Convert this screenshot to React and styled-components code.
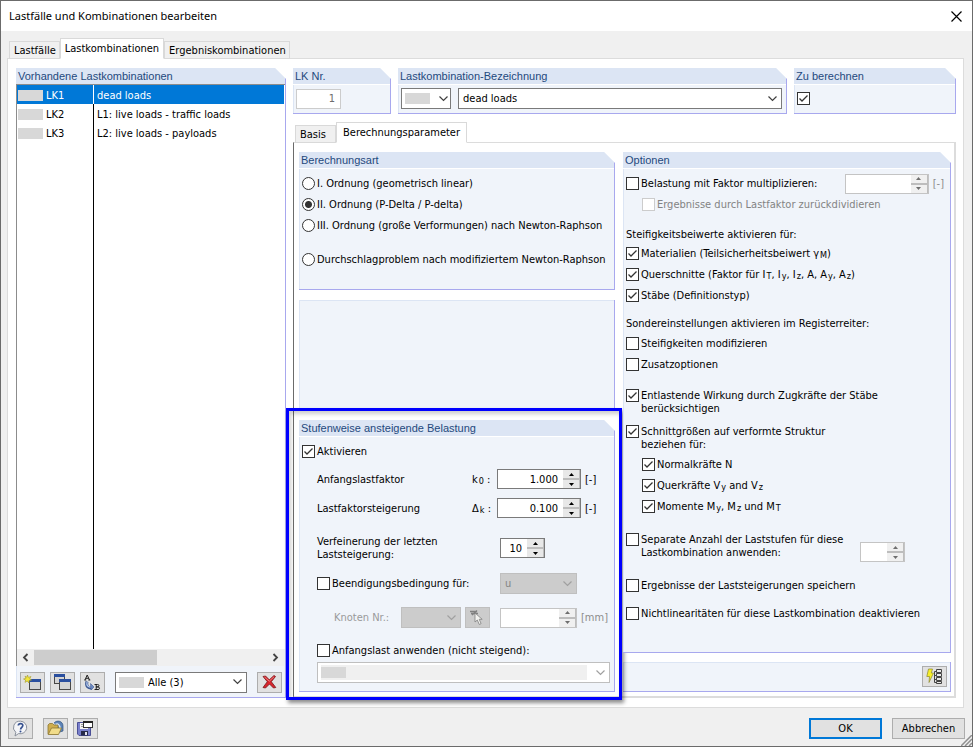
import React, { useId } from "react";
import styled, { createGlobalStyle, css } from "styled-components";

const UI = `"DejaVu Sans Condensed", "DejaVu Sans", sans-serif`;

const Global = createGlobalStyle`
  *, *::before, *::after { box-sizing: border-box; }
  body { margin: 0; background: #f0f0f0; color: #000; font: 11px/13px ${UI}; }
  button, input, select { font: inherit; color: inherit; margin: 0; }
`;

const svgUrl = (w, h, body) =>
  `url("data:image/svg+xml,${encodeURIComponent(
    `<svg xmlns='http://www.w3.org/2000/svg' width='${w}' height='${h}'>${body}</svg>`
  )}")`;
const tick = svgUrl(11, 11, "<path d='M1.5 5.5 4 8 9.5 2.5' fill='none' stroke='#333' stroke-width='1.3'/>");
const chevron = (color) =>
  svgUrl(9, 6, `<path d='M.5 .5 4.500 4.500 8.500 .5' fill='none' stroke='${color}' stroke-width='1.2'/>`);

const Window = styled.div`
  min-height: 100vh;
  display: flex;
  flex-direction: column;
  border: 1px solid #6b6b6b;
  background: #f0f0f0;
`;
const TitleBar = styled.header`
  display: flex;
  align-items: center;
  justify-content: space-between;
  height: 30px;
  padding: 0 8px;
  background: #fff;
`;
const Title = styled.h1`
  margin: 0;
  font: 11px/16px "Noto Sans", sans-serif;
`;
const CloseButton = styled.button`
  display: flex;
  padding: 2px;
  border: 0;
  background: none;
`;
const Dialog = styled.main`
  flex: 1;
  display: flex;
  flex-direction: column;
  padding: 7px 8px 0 6px;
`;
const TabBar = styled.div`
  display: flex;
  align-items: flex-end;
  height: ${(p) => (p.$inner ? 22 : 21)}px;
  padding-left: 2px;
  position: relative;
  z-index: 1;
  margin-bottom: -1px;
`;
const Tab = styled.button`
  min-width: 41px;
  height: ${(p) => (p.$active ? 21 : 18)}px;
  padding: ${(p) => (p.$active ? "0 4px 1px" : "1px 3px 0 4px")};
  ${(p) => p.$roomy && css`padding-left: 6px; padding-right: 6px;`}
  text-align: left;
  border: 1px solid #d9d9d9;
  border-bottom-color: ${(p) => (p.$active ? "#fff" : "#d9d9d9")};
  background: ${(p) => (p.$active ? "#fff" : "#f0f0f0")};
  white-space: nowrap;
  & + & { border-left-width: ${(p) => (p.$active ? 1 : 0)}px; }
`;
const TabPage = styled.div`
  flex: 1;
  display: grid;
  grid-template-columns: 270px minmax(0, 1fr);
  column-gap: 7px;
  padding: 9px 7px 9px 8px;
  border: 1px solid #dcdcdc;
  background: #fff;
`;
const Column = styled.div`
  display: flex;
  flex-direction: column;
  min-width: 0;
`;

/* Group frame with a clipped top-right corner */
const GroupFrame = styled.section`
  display: flex;
  flex-direction: column;
  min-width: 0;
  border: solid #a8a8ee;
  border-width: 0 1px 1px 0;
  background: #f0f4fa;
  box-shadow: inset 1px 0 #dce5f4${(p) => (p.$plain ? ", inset 0 1px #dce5f4" : "")};
  ${(p) => !p.$plain && css`
    clip-path: polygon(0 0, calc(100% - 11px) 0, 100% 11px, 100% 100%, 0 100%);
  `}
  ${(p) => p.$grow && css`flex: 1;`}
`;
const GroupTitle = styled.h2`
  margin: 0;
  height: 17px;
  padding: 0 2px;
  border-bottom: 1px solid #fff;
  background: #dce5f4;
  color: #1f497d;
  font: 11px/16px "Liberation Sans", sans-serif;
  flex: none;
`;
const GroupBody = styled.div`
  padding: 4px 4px 4px 3px;
`;
function Group({ title, grow, children }) {
  return (
    <GroupFrame $grow={grow}>
      <GroupTitle>{title}</GroupTitle>
      {children}
    </GroupFrame>
  );
}

const ListPane = styled.div`
  flex: 1;
  display: flex;
  flex-direction: column;
  margin-top: -1px;
  border: solid #8c8c8c;
  border-width: 1px 0 0 1px;
  background: linear-gradient(#000, #000) 76px 0 / 1px 100% no-repeat #fff;
`;
const ListRow = styled.button`
  display: grid;
  grid-template-columns: 77px 1fr;
  height: 19px;
  padding: 1px 0 0;
  border: 0;
  margin-right: ${(p) => (p.$selected ? 1 : 0)}px;
  text-align: left;
  align-items: center;
  color: ${(p) => (p.$selected ? "#fff" : "#000")};
  background: ${(p) =>
    p.$selected ? "linear-gradient(#fff, #fff) 76px 0 / 1px 100% no-repeat #0078d7" : "none"};
`;
const RowKey = styled.span`
  display: flex;
  align-items: center;
  gap: 3px;
  padding-left: 1px;
`;
const RowText = styled.span`
  padding-left: 3px;
`;
const Swatch = styled.span`
  flex: none;
  width: 25px;
  height: 11px;
  background: #d8d8d8;
`;
const ScrollBar = styled.div`
  display: grid;
  grid-template-columns: 17px 1fr 17px;
  height: 17px;
  border-left: 1px solid #8c8c8c;
  background: #f0f0f0;
  margin-right: 1px;
`;
const ScrollArrow = styled.button`
  display: grid;
  place-items: center;
  padding: 0;
  border: 0;
  background: none;
`;
const ScrollTrack = styled.div`
  padding: 1px 0;
`;
const ScrollThumb = styled.div`
  width: 53%;
  height: 15px;
  background: #cdcdcd;
`;
const Toolbar = styled.div`
  display: flex;
  align-items: center;
  gap: 5px;
  height: 31px;
  padding: 1px 3px 0 4px;
`;
const IconButton = styled.button`
  flex: none;
  display: grid;
  place-items: center;
  width: 25px;
  height: 21px;
  padding: 0;
  border: 1px solid ${(p) => (p.disabled ? "#bfbfbf" : "#adadad")};
  background: ${(p) => (p.disabled ? "#ccc" : "#e1e1e1")};
`;
const Select = styled.span`
  display: flex;
  align-items: center;
  min-width: 0;
  height: 21px;
  padding-left: ${(p) => (p.$swatch ? 3 : 0)}px;
  border: 1px solid ${(p) => (p.$off ? "#bfbfbf" : "#7a7a7a")};
  background: ${(p) => (p.$gray ? "#ccc" : "#fff")};
  color: ${(p) => (p.$off ? "#838383" : "#000")};
  flex: ${(p) => (p.$width ? `0 0 ${p.$width}px` : "1")};
  select {
    appearance: none;
    flex: 1;
    min-width: 0;
    height: 19px;
    padding: 0 18px 0 4px;
    border: 0;
    border-radius: 0;
    opacity: 1;
    color: inherit;
    background: ${(p) => chevron(p.$off ? "#a0a0a0" : "#404040")} right 4px center no-repeat;
  }
`;
const FillBar = styled.span`
  flex: 1;
  display: flex;
  height: 15px;
  align-items: center;
  background: #f0f0f0;
`;
const NarrowSlot = styled.span`
  flex: 0 0 19px;
  display: flex;
`;

const SpinFrame = styled.span`
  flex: 0 0 ${(p) => p.$width}px;
  display: flex;
  height: 20px;
  border: 1px solid ${(p) => (p.$off ? "#c4c4c4" : "#7a7a7a")};
  background: #fff;
`;
const SpinInput = styled.input`
  flex: 1;
  min-width: 0;
  width: 0;
  padding: 0 5px;
  border: 0;
  background: none;
  text-align: right;
`;
const SpinButtons = styled.span`
  display: grid;
  grid-template-rows: 1fr 1fr;
  gap: 2px;
  flex: 0 0 17px;
  padding-right: 1px;
  background: #bdbdbd;
`;
const SpinButton = styled.button`
  display: grid;
  place-items: center;
  padding: 0;
  border: 0;
  background: ${(p) => (p.disabled ? "#f0f0f0" : "#e8e8e8")};
  svg { fill: ${(p) => (p.disabled ? "#6e6e6e" : "#000")}; }
`;
function Spin({ label, value = "", width, off }) {
  return (
    <SpinFrame $width={width} $off={off}>
      <SpinInput aria-label={label} defaultValue={value} disabled={off} />
      <SpinButtons>
        <SpinButton aria-label={`${label} +`} disabled={off}>
          <svg width="5" height="3"><path d="M0 3 2.500 0 5 3z" /></svg>
        </SpinButton>
        <SpinButton aria-label={`${label} -`} disabled={off}>
          <svg width="5" height="3"><path d="M0 0 2.500 3 5 0z" /></svg>
        </SpinButton>
      </SpinButtons>
    </SpinFrame>
  );
}

const ChoiceRow = styled.div`
  display: flex;
  align-items: ${(p) => (p.$top ? "flex-start" : "center")};
  gap: 2px;
  min-height: ${(p) => (p.$top ? 0 : 21)}px;
  margin-top: ${(p) => p.$space || 0}px;
  padding-left: ${(p) => (p.$indent ? 16 : 0)}px;
  color: ${(p) => (p.$off ? "#838383" : "#000")};
`;
const Box = styled.input`
  appearance: none;
  flex: none;
  width: 13px;
  height: 13px;
  border: 1px solid #333;
  background: #fff;
  ${(p) => p.type === "radio" && css`
    border-radius: 50%;
    &:checked { background: radial-gradient(circle, #333 3px, #fff 4px); }
  `}
  ${(p) => p.type === "checkbox" && css`
    &:checked { background: ${tick} center no-repeat #fff; }
  `}
  &:disabled { border-color: #ccc; }
`;
const Caption = styled.label`
  white-space: nowrap;
`;
function Choice({ type = "checkbox", name, checked, children, after, ...row }) {
  const id = useId();
  return (
    <ChoiceRow {...row}>
      <Box id={id} type={type} name={name} defaultChecked={checked} disabled={row.$off} />
      <Caption htmlFor={id}>{children}</Caption>
      {after}
    </ChoiceRow>
  );
}
const Sub = styled.sub`
  margin-left: 1px;
  font-size: 9px;
  line-height: 0;
  vertical-align: -1px;
`;
const Note = styled.p`
  margin: ${(p) => p.$space}px 0 ${(p) => p.$below || 2}px;
`;
const EndSlot = styled.span`
  display: flex;
  align-items: center;
  gap: 4px;
  margin-left: auto;
  padding-right: ${(p) => (p.$inset ? 41 : 2)}px;
  align-self: ${(p) => (p.$inset ? "flex-end" : "center")};
  margin-bottom: ${(p) => (p.$inset ? -3 : 0)}px;
`;
const Unit = styled.span`
  color: ${(p) => (p.$off ? "#8c8c8c" : "#000")};
`;

const HeadRow = styled.div`
  display: grid;
  grid-template-columns: 98px minmax(0, 1fr) 162px;
  column-gap: 7px;
  height: 46px;
`;
const HeadFields = styled.div`
  display: flex;
  align-items: center;
  gap: 7px;
  flex: 1;
  padding: 0 4px 1px 3px;
`;
const NumberField = styled.input`
  width: 45px;
  height: 20px;
  padding: 0 5px;
  border: 1px solid #ccc;
  background: #fff;
  text-align: right;
  color: #6d6d6d;
`;
const ParamTabs = styled.div`
  display: flex;
  flex-direction: column;
  flex: 1;
  margin-top: 7px;
`;
const ParamPage = styled.div`
  flex: 1;
  display: grid;
  grid-template-columns: 316px minmax(0, 1fr);
  column-gap: 8px;
  padding: 9px 3px 4px 5px;
  border: solid #dcdcdc;
  border-width: 1px 2px 2px 1px;
  border-left-color: #6b6b6b;
`;
const OptionColumn = styled(Column)`
  gap: 9px;
`;
const ModeColumn = styled(Column)`
  gap: 10px;
`;
const ModeBody = styled(GroupBody)`
  height: 120px;
`;
const EmptyGroup = styled(GroupFrame)`
  flex: 1;
`;
const Highlighted = styled.div`
  position: relative;
  &::after {
    content: "";
    position: absolute;
    inset: -12px -7px -8px -13px;
    border: 3px solid #0000ff;
    box-shadow: 2px 3px 4px rgba(0, 0, 0, 0.45), inset 2px 3px 4px rgba(0, 0, 0, 0.2);
    pointer-events: none;
  }
`;
const LoadBody = styled(GroupBody)`
  display: flex;
  flex-direction: column;
`;
const Field = styled.div`
  display: flex;
  align-items: center;
  min-height: 20px;
  padding-left: ${(p) => (p.$deep ? 32 : 15)}px;
  margin-top: ${(p) => p.$space}px;
  color: ${(p) => (p.$off ? "#9a9a9a" : "#000")};
`;
const FieldLabel = styled.label`
  flex: 0 0 ${(p) => p.$width}px;
`;
const Symbol = styled.span`
  flex: 0 0 25px;
`;
const Spacer = styled.span`
  flex: 0 0 ${(p) => p.$w}px;
`;
const CalcBar = styled.div`
  display: flex;
  align-items: center;
  justify-content: flex-end;
  height: 30px;
  padding-right: 3px;
  border: solid #a8a8ee;
  border-width: 0 1px 1px 0;
  background: #f0f4fa;
  box-shadow: inset 1px 1px #dce5f4;
`;
const Footer = styled.footer`
  position: relative;
  display: flex;
  align-items: center;
  gap: 10px;
  height: 38px;
  padding: 2px 7px 0 7px;
`;
const FooterIcons = styled.div`
  display: flex;
  flex: 1;
  gap: 5px;
  margin-right: auto;
  button:first-child { margin-right: 5px; }
`;
const PushButton = styled.button`
  width: 73px;
  height: 21px;
  padding: 0;
  border: ${(p) => (p.$primary ? "2px solid #0078d7" : "1px solid #adadad")};
  background: #e1e1e1;
`;
const Grip = styled.svg`
  position: absolute;
  right: 0;
  bottom: 0;
`;

const WinShape = ({ x, y, w = 10, h = 9 }) => (
  <g>
    <rect x={x + 0.5} y={y + 0.5} width={w} height={h} fill="#d4d4d4" stroke="#484848" />
    <rect x={x} y={y} width={w + 1} height="3" fill="#2a4f9f" />
  </g>
);
const NewIcon = () => (
  <svg width="19" height="17">
    <WinShape x={6} y={5} w={11} h={10} />
    <path d="M4.500 1 5.400 3.400 8 2.500 6.700 4.700 8.500 6 6 6.400 6 9 4.200 7 2 8.400 2.600 6 .5 5 2.900 4.300 2 2.200 4 3.200z" fill="#f4e63a" stroke="#a49a2a" strokeWidth=".6" />
  </svg>
);
const CopyIcon = () => (
  <svg width="19" height="17">
    <WinShape x={1} y={0} />
    <WinShape x={6} y={5} w={11} h={10} />
  </svg>
);
const RenameIcon = () => (
  <svg width="19" height="17">
    <path d="M2 6 4.200 1 6.500 6M2.800 4.300h3M1.300 6h2M5.300 6h2" fill="none" stroke="#222" />
    <path d="M4 7.500C2.500 12.500 5.500 14.500 9 14" fill="none" stroke="#3f5b94" strokeWidth="3" />
    <path d="M4 8C3.200 12 5.500 13.300 8 13" fill="none" stroke="#b9cdf0" strokeWidth="1.200" />
    <path d="M7.500 9.500 11 13 8 16z" fill="#6d8cc4" stroke="#3f5b94" strokeWidth=".6" />
    <path d="M11.500 10.500h3q1.500 0 1.500 1.200t-1.500 1.200h-1.500 2q1.500 .2 1.500 1.400T15 15.500h-3.500M13.200 10.500v5" fill="none" stroke="#222" />
  </svg>
);
const DeleteIcon = () => (
  <svg width="17" height="16">
    <path d="M2 2.500 4.500 2 8.300 5.800 13 1.500 14.500 2.500 10.300 7.700 14.800 13.500 12.500 14 8.500 10 4.500 14 2 13.500 6.300 7.700z" fill="#d8242b" stroke="#75161a" strokeWidth=".8" />
    <path d="M3.500 3 8.300 7.200 13 2.800" fill="none" stroke="#f07a7a" />
  </svg>
);
const HelpIcon = () => (
  <svg width="19" height="17">
    <path d="M9.500 1.200a6.600 6.300 0 1 1-2 12.400L4 16l.8-3.700A6.600 6.300 0 0 1 9.500 1.200z" fill="#f4f5f8" stroke="#8a909b" />
    <path d="M7.300 5.500C7.500 3 12 3 11.800 5.500 11.600 7.300 9.700 7.500 9.600 9.500" fill="none" stroke="#35508f" strokeWidth="1.700" />
    <circle cx="9.500" cy="11.600" r="1" fill="#35508f" />
  </svg>
);
const OpenIcon = () => (
  <svg width="19" height="17">
    <path d="M8 3C11-.5 17 1 17 6v5l-3 1" fill="#5d83b7" stroke="#36577f" strokeWidth=".7" />
    <path d="M9.500 4.500Q13 2.500 14.500 9" fill="none" stroke="#d7e5f6" strokeWidth="1.500" />
    <path d="M2 14V5l1.500-1.500h3L8 5h4v9z" fill="#cfae4e" stroke="#8b7634" strokeWidth=".8" />
    <path d="M2.200 14.500 5.500 8h10L12.500 14.500z" fill="#f1dc8a" stroke="#8b7634" strokeWidth=".8" />
  </svg>
);
const SaveIcon = () => (
  <svg width="19" height="17">
    <path d="M1.500 2.500h13v13H3l-1.500-1.500z" fill="#7a80cc" stroke="#4b4f96" />
    <path d="M4 3h8v6H4z" fill="#f2f2f2" />
    <path d="M5 4.500h4M5 6.500h5" stroke="#999" />
    <path d="M5 11h7v4.500H5z" fill="#272a48" />
    <path d="M9 12h2v3H9z" fill="#e3e3ee" />
    <rect x="7.500" y="1.500" width="9" height="6" fill="#fff" stroke="#333" />
    <path d="M7 1h10v2H7z" fill="#222" />
  </svg>
);
const PickIcon = () => (
  <svg width="19" height="17">
    <path d="M2 2.500h7M4 6 9 1.500M3 4.500h7" stroke="#808080" strokeWidth="1.500" fill="none" />
    <path d="M7 4v9l2.300-2 2 4.500 1.800-.9-1.900-4.300h3z" fill="#f3f3f0" stroke="#808080" strokeWidth=".8" />
  </svg>
);
const CalcIcon = () => (
  <svg width="19" height="17">
    <path d="M3.500 1h4L6.300 5H8.500L4 14.500l.5-6H1.800z" fill="#f6ee29" stroke="#8a8732" strokeWidth=".7" />
    <path d="M9.500 3.500v11M9.500 3.500H12M9.500 7.500H12M9.500 11.500H12M9.500 14.500H12" stroke="#444" fill="none" />
    <path d="M11.500 1.500h5v3h-5zM11.500 5.500h5v3h-5zM11.500 9.500h5v3h-5zM11.500 13.500h5v2h-5z" fill="#e8e8e8" stroke="#444" />
  </svg>
);

const loads = [
  ["LK1", "dead loads"],
  ["LK2", "L1: live loads - traffic loads"],
  ["LK3", "L2: live loads - payloads"],
];

function CombinationList() {
  return (
    <Column>
      <Group title="Vorhandene Lastkombinationen" grow>
        <ListPane>
          {loads.map(([key, text], i) => (
            <ListRow key={key} $selected={i === 0}>
              <RowKey><Swatch />{key}</RowKey>
              <RowText>{text}</RowText>
            </ListRow>
          ))}
        </ListPane>
        <ScrollBar>
          <ScrollArrow aria-label="Links">
            <svg width="7" height="9"><path d="M5.500 1 2 4.500 5.500 8" fill="none" stroke="#444" strokeWidth="1.800" /></svg>
          </ScrollArrow>
          <ScrollTrack><ScrollThumb /></ScrollTrack>
          <ScrollArrow aria-label="Rechts">
            <svg width="7" height="9"><path d="M1.500 1 5 4.500 1.500 8" fill="none" stroke="#444" strokeWidth="1.800" /></svg>
          </ScrollArrow>
        </ScrollBar>
        <Toolbar>
          <IconButton aria-label="Neu"><NewIcon /></IconButton>
          <IconButton aria-label="Kopieren"><CopyIcon /></IconButton>
          <IconButton aria-label="Umnummerieren"><RenameIcon /></IconButton>
          <Spacer $w={0} />
          <Select $swatch>
            <Swatch />
            <select aria-label="Filter"><option>Alle (3)</option></select>
          </Select>
          <Spacer $w={0} />
          <IconButton aria-label="Löschen"><DeleteIcon /></IconButton>
        </Toolbar>
      </Group>
    </Column>
  );
}

function StepLoading() {
  return (
    <Highlighted>
      <Group title="Stufenweise ansteigende Belastung">
        <LoadBody>
          <Choice checked>Aktivieren</Choice>
          <Field $space={7}>
            <FieldLabel as="span" $width={155}>Anfangslastfaktor</FieldLabel>
            <Symbol>k<Sub>0</Sub> :</Symbol>
            <Spin label="Anfangslastfaktor" value="1.000" width={84} />
            <Spacer $w={4} />
            <Unit>[-]</Unit>
          </Field>
          <Field $space={9}>
            <FieldLabel as="span" $width={155}>Lastfaktorsteigerung</FieldLabel>
            <Symbol>Δ<Sub>k</Sub> :</Symbol>
            <Spin label="Lastfaktorsteigerung" value="0.100" width={84} />
            <Spacer $w={4} />
            <Unit>[-]</Unit>
          </Field>
          <Field $space={17}>
            <FieldLabel as="span" $width={183}>Verfeinerung der letzten<br />Laststeigerung:</FieldLabel>
            <Spin label="Verfeinerung der letzten Laststeigerung" value="10" width={45} />
          </Field>
          <Field $space={12}>
            <FieldLabel as="div" $width={183}><Choice>Beendigungsbedingung für:</Choice></FieldLabel>
            <Select $gray $off $width={77}>
              <select aria-label="Beendigungsbedingung" disabled><option>u</option></select>
            </Select>
          </Field>
          <Field $deep $off $space={13}>
            <FieldLabel $width={67} htmlFor="knoten">Knoten Nr.:</FieldLabel>
            <Select $gray $off $width={60}>
              <select id="knoten" disabled />
            </Select>
            <Spacer $w={4} />
            <IconButton disabled aria-label="Knoten wählen"><PickIcon /></IconButton>
            <Spacer $w={10} />
            <Spin label="Grenzwert" width={77} off />
            <Spacer $w={4} />
            <Unit $off>[mm]</Unit>
          </Field>
          <Field $space={12}><Choice>Anfangslast anwenden (nicht steigend):</Choice></Field>
          <Field $space={1}>
            <Select $swatch $off>
              <FillBar><Swatch /></FillBar>
              <NarrowSlot><select aria-label="Anfangslast" disabled /></NarrowSlot>
            </Select>
          </Field>
          <Spacer $w={4} />
        </LoadBody>
      </Group>
    </Highlighted>
  );
}

function Options() {
  return (
    <Group title="Optionen" grow>
      <GroupBody>
        <Choice
          after={<EndSlot><Spin label="Faktor" width={84} off /><Unit $off>[-]</Unit></EndSlot>}
        >
          Belastung mit Faktor multiplizieren:
        </Choice>
        <Choice $indent $off>Ergebnisse durch Lastfaktor zurückdividieren</Choice>
        <Note $space={13}>Steifigkeitsbeiwerte aktivieren für:</Note>
        <Choice checked>Materialien (Teilsicherheitsbeiwert γ<Sub>M</Sub>)</Choice>
        <Choice checked>
          Querschnitte (Faktor für I<Sub>T</Sub>, I<Sub>y</Sub>, I<Sub>z</Sub>, A, A<Sub>y</Sub>, A<Sub>z</Sub>)
        </Choice>
        <Choice checked>Stäbe (Definitionstyp)</Choice>
        <Note $space={11} $below={3}>Sondereinstellungen aktivieren im Registerreiter:</Note>
        <Choice>Steifigkeiten modifizieren</Choice>
        <Choice>Zusatzoptionen</Choice>
        <Choice checked $top $space={14}>
          Entlastende Wirkung durch Zugkräfte der Stäbe<br />berücksichtigen
        </Choice>
        <Choice checked $top $space={10}>
          Schnittgrößen auf verformte Struktur<br />beziehen für:
        </Choice>
        <Choice checked $indent $space={3}>Normalkräfte N</Choice>
        <Choice checked $indent>Querkräfte V<Sub>y</Sub> and V<Sub>z</Sub></Choice>
        <Choice checked $indent>Momente M<Sub>y</Sub>, M<Sub>z</Sub> und M<Sub>T</Sub></Choice>
        <Choice
          $top
          $space={16}
          after={<EndSlot $inset><Spin label="Laststufen" width={45} off /></EndSlot>}
        >
          Separate Anzahl der Laststufen für diese<br />Lastkombination anwenden:
        </Choice>
        <Choice $space={16}>Ergebnisse der Laststeigerungen speichern</Choice>
        <Choice $space={7}>Nichtlinearitäten für diese Lastkombination deaktivieren</Choice>
      </GroupBody>
    </Group>
  );
}

export default function App() {
  return (
    <Window>
      <Global />
      <TitleBar>
        <Title>Lastfälle und Kombinationen bearbeiten</Title>
        <CloseButton aria-label="Schließen">
          <svg width="11" height="11"><path d="M.5 .5 10.500 10.500M10.500 .5 .5 10.500" stroke="#000" strokeWidth="1.200" /></svg>
        </CloseButton>
      </TitleBar>
      <Dialog>
        <TabBar>
          <Tab>Lastfälle</Tab>
          <Tab $active>Lastkombinationen</Tab>
          <Tab>Ergebniskombinationen</Tab>
        </TabBar>
        <TabPage>
          <CombinationList />
          <Column>
            <HeadRow>
              <Group title="LK Nr.">
                <HeadFields><NumberField aria-label="LK Nr." defaultValue="1" disabled /></HeadFields>
              </Group>
              <Group title="Lastkombination-Bezeichnung">
                <HeadFields>
                  <Select $swatch $width={50}><Swatch /><select aria-label="Farbe" /></Select>
                  <Select>
                    <select aria-label="Bezeichnung"><option>dead loads</option></select>
                  </Select>
                </HeadFields>
              </Group>
              <Group title="Zu berechnen">
                <HeadFields><Box type="checkbox" aria-label="Zu berechnen" defaultChecked /></HeadFields>
              </Group>
            </HeadRow>
            <ParamTabs>
              <TabBar $inner>
                <Tab>Basis</Tab>
                <Tab $active $roomy>Berechnungsparameter</Tab>
              </TabBar>
              <ParamPage>
                <ModeColumn>
                  <Group title="Berechnungsart">
                    <ModeBody>
                      <Choice type="radio" name="art">I. Ordnung (geometrisch linear)</Choice>
                      <Choice type="radio" name="art" checked>II. Ordnung (P-Delta / P-delta)</Choice>
                      <Choice type="radio" name="art">III. Ordnung (große Verformungen) nach Newton-Raphson</Choice>
                      <Choice type="radio" name="art" $space={13}>
                        Durchschlagproblem nach modifiziertem Newton-Raphson
                      </Choice>
                    </ModeBody>
                  </Group>
                  <EmptyGroup $plain />
                  <StepLoading />
                </ModeColumn>
                <OptionColumn>
                  <Options />
                  <CalcBar>
                    <IconButton aria-label="Berechnungsdetails"><CalcIcon /></IconButton>
                  </CalcBar>
                </OptionColumn>
              </ParamPage>
            </ParamTabs>
          </Column>
        </TabPage>
      </Dialog>
      <Footer>
        <FooterIcons>
          <IconButton aria-label="Hilfe"><HelpIcon /></IconButton>
          <IconButton aria-label="Öffnen"><OpenIcon /></IconButton>
          <IconButton aria-label="Speichern"><SaveIcon /></IconButton>
        </FooterIcons>
        <PushButton $primary>OK</PushButton>
        <PushButton>Abbrechen</PushButton>
        <Grip width="11" height="11">
          <path d="M0 11 11 0M4 11 11 4M8 11 11 8" stroke="#8f8f8f" strokeWidth="1.500" />
        </Grip>
      </Footer>
    </Window>
  );
}
